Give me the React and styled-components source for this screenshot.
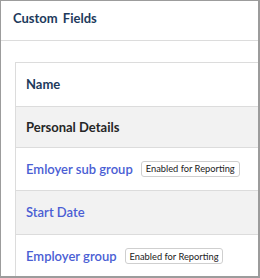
import React from 'react'
import styled, { createGlobalStyle } from 'styled-components';

const GlobalStyle = createGlobalStyle`
    html, body {
        margin: 0;
        padding: 0;
        background: #ffffff;
    }
    * {
        box-sizing: border-box;
    }
`

const Frame = styled.div`
    width: 260px;
    height: 278px;
    overflow: hidden;
    border-top: 1px solid #9c9c9c;
    border-left: 1px solid #9c9c9c;
    border-right: 2px solid #9c9c9c;
    border-bottom: 2px solid #9c9c9c;
    background: #fff;
    font-family: Lato, "Noto Sans", sans-serif;
    display: flex;
    flex-direction: column;
`

const Header = styled.div`
    height: 40px;
    flex-shrink: 0;
    display: flex;
    align-items: center;
    padding: 0 0 5px 12px;
    border-bottom: 1px solid #dcdcdc;
    color: #1d3a5c;
    font-size: 13px;
    font-weight: 700;
    word-spacing: 2px;
`

const Body = styled.div`
    flex: 1;
    padding: 21px 0 0 14px;
`

const Card = styled.div`
    width: 300px;
    border-top: 1px solid #dcdcdc;
    border-left: 1px solid #dcdcdc;
    height: 100%;
`

const Row = styled.div`
    height: ${p => p.h || 42}px;
    display: flex;
    align-items: center;
    gap: 8px;
    padding: 0 0 1px 10px;
    background: ${p => p.shaded ? '#f2f2f2' : '#fff'};
    border-bottom: ${p => p.last ? 'none' : '1px solid #dcdcdc'};
`

const HeadText = styled.span`
    font-size: 13px;
    font-weight: 700;
    color: ${p => p.dark ? '#262626' : '#1d3a5c'};
`

const FieldLink = styled.a`
    font-size: 13px;
    font-weight: 600;
    color: #4a5ed4;
    text-decoration: none;
    cursor: pointer;
`

const Badge = styled.span`
    height: 16px;
    display: inline-flex;
    align-items: center;
    padding: 0 4px;
    border: 1px solid #cfcfcf;
    border-radius: 3px;
    font-size: 9.3px;
    color: #222;
    background: #fff;
`

const fields = [
    { name: 'Emloyer sub group', reporting: true },
    { name: 'Start Date', reporting: false, shaded: true },
    { name: 'Employer group', reporting: true },
]

const App = () => {
    return (
        <Frame>
            <GlobalStyle />
            <Header>Custom Fields</Header>
            <Body>
                <Card>
                    <Row h={44}>
                        <HeadText>Name</HeadText>
                    </Row>
                    <Row h={41} shaded>
                        <HeadText dark>Personal Details</HeadText>
                    </Row>
                    {fields.map((f, i) => (
                        <Row key={f.name} h={i === 1 ? 44 : 43} shaded={f.shaded} last={i === fields.length - 1}>
                            <FieldLink>{f.name}</FieldLink>
                            {f.reporting && <Badge>Enabled for Reporting</Badge>}
                        </Row>
                    ))}
                </Card>
            </Body>
        </Frame>
    )
}

export default App;
